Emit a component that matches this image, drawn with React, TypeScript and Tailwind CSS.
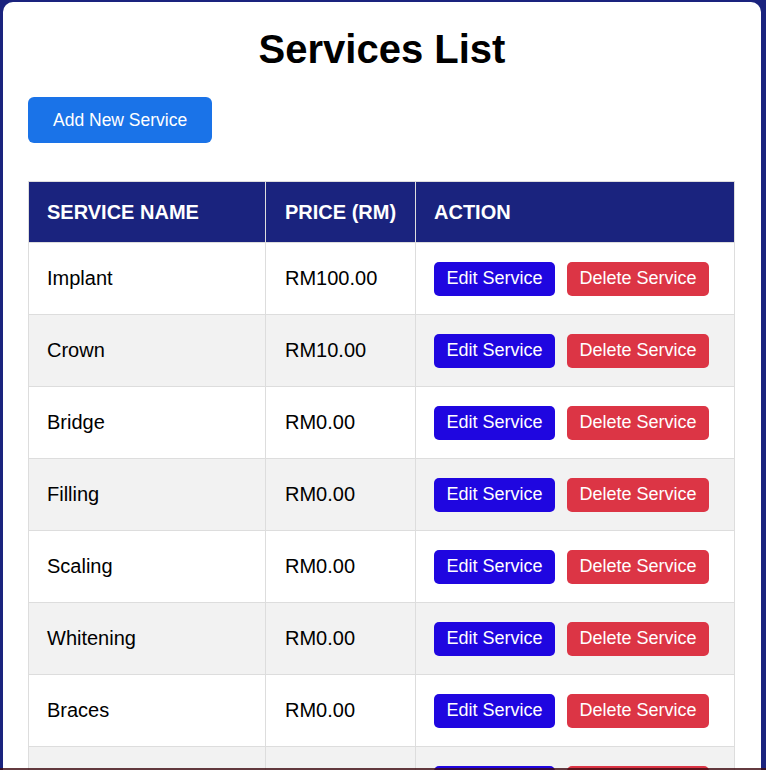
import React from 'react';

const services = [
  { name: 'Implant', price: 'RM100.00' },
  { name: 'Crown', price: 'RM10.00' },
  { name: 'Bridge', price: 'RM0.00' },
  { name: 'Filling', price: 'RM0.00' },
  { name: 'Scaling', price: 'RM0.00' },
  { name: 'Whitening', price: 'RM0.00' },
  { name: 'Braces', price: 'RM0.00' },
  { name: 'Root Canal', price: 'RM0.00' },
  { name: 'Extraction', price: 'RM0.00' },
];

const App: React.FC = () => {
  return (
    <div className="min-h-screen bg-[#1a237e] pt-[2px] pb-[20px] font-['Liberation_Sans',Arial,sans-serif]">
      <div className="ml-[3px] w-[758px] bg-white rounded-[10px] px-[25px] pt-[24px] pb-[30px]">
        <h1 className="text-center text-[40px] leading-[46px] font-bold text-black">Services List</h1>

        <button className="mt-[25px] h-[46px] px-[25px] rounded-[6px] bg-[#1a73e8] text-white text-[17.5px]">
          Add New Service
        </button>

        {/* table */}
        <table className="mt-[38px] w-[707px] border-collapse table-fixed">
          <colgroup>
            <col className="w-[237px]" />
            <col className="w-[150px]" />
            <col />
          </colgroup>
          <thead>
            <tr className="bg-[#1a237e] text-white">
              <th className="h-[61px] pl-[18px] pr-[8px] whitespace-nowrap text-left text-[20px] font-bold uppercase border border-[#dddddd]">Service Name</th>
              <th className="h-[61px] pl-[19px] pr-[6px] whitespace-nowrap text-left text-[20px] font-bold uppercase border border-[#dddddd]">Price (RM)</th>
              <th className="h-[61px] pl-[18px] pr-[8px] whitespace-nowrap text-left text-[20px] font-bold uppercase border border-[#dddddd]">Action</th>
            </tr>
          </thead>
          <tbody>
            {services.map((s, i) => (
              <tr key={s.name} className={i % 2 === 1 ? 'bg-[#f2f2f2]' : 'bg-white'}>
                <td className="h-[72px] pl-[18px] pr-[8px] pb-[1px] text-[20px] text-black border border-[#dddddd]">{s.name}</td>
                <td className="h-[72px] pl-[19px] pr-[8px] pb-[1px] text-[20px] text-black border border-[#dddddd]">{s.price}</td>
                <td className="h-[72px] pl-[18px] pr-[8px] border border-[#dddddd]">
                  <div className="flex gap-[12px]">
                    <button className="h-[34px] w-[121px] rounded-[5px] bg-[#1f06e0] text-white text-[18px]">Edit Service</button>
                    <button className="h-[34px] w-[142px] rounded-[5px] bg-[#dc3545] text-white text-[18px]">Delete Service</button>
                  </div>
                </td>
              </tr>
            ))}
          </tbody>
        </table>
      </div>

      {/* dark strip at bottom edge */}
      <div className="fixed left-0 right-0 bottom-0 h-[2px] bg-[#3d0a10]/80" />
    </div>
  );
};

export default App;
